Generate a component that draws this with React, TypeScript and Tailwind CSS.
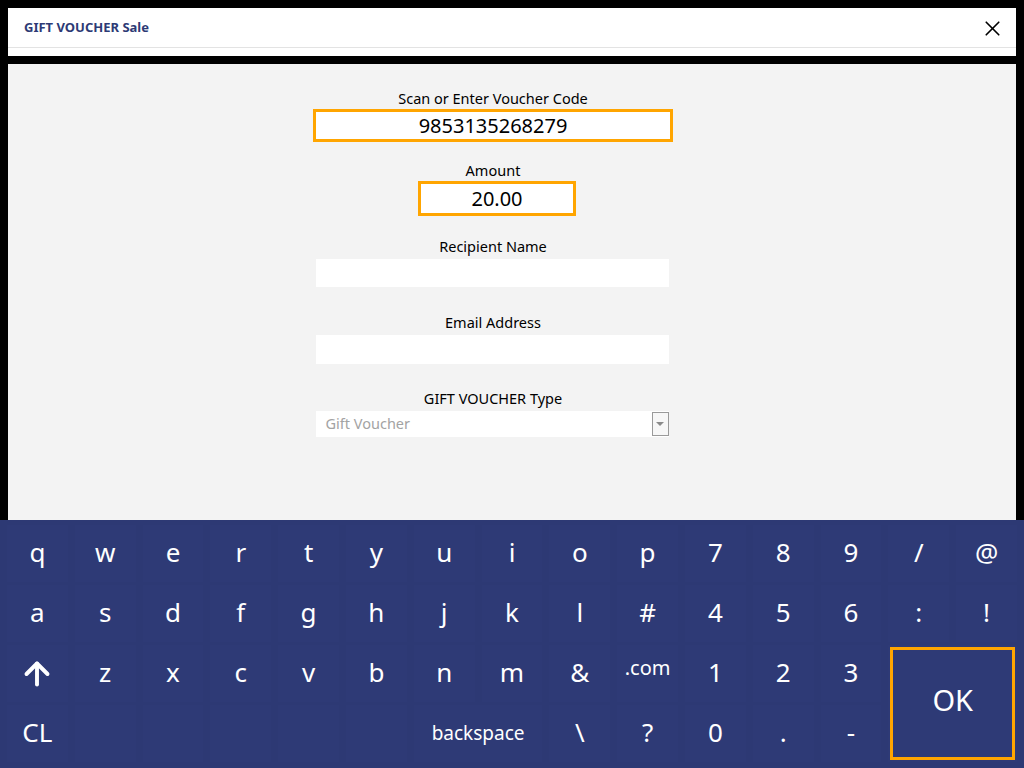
import { ArrowUp, X } from "lucide-react"

const font = { fontFamily: '"Segoe UI", "Noto Sans", "Open Sans", sans-serif' }

type Key = { label: string }

const row1: Key[] = "q w e r t y u i o p 7 8 9 / @".split(" ").map((l) => ({ label: l }))
const row2: Key[] = "a s d f g h j k l # 4 5 6 : !".split(" ").map((l) => ({ label: l }))
const row3: Key[] = "z x c v b n m & .com 1 2 3".split(" ").map((l) => ({ label: l }))

function KeyCell({ k }: { k: Key }) {
  return (
    <div className="flex items-center justify-center bg-[#2e3a76] text-white text-[26px] leading-none">
      {k.label === ".com" ? <span className="text-[20px] -mt-3">.com</span> : <span className="-mt-1">{k.label}</span>}
    </div>
  )
}

function Label({ text }: { text: string }) {
  return <div className="h-[20px] text-[14.5px] text-black leading-5 text-center">{text}</div>
}

export default function App() {
  return (
    <div className="w-[1024px] h-[768px] bg-black flex flex-col overflow-hidden" style={font}>
      {/* Header */}
      <div className="mx-2 mt-2 h-[48px] bg-white flex flex-col">
        <div className="h-[40px] flex items-center justify-between pl-4 pr-3 border-b border-[#e3e3e3]">
          <span className="text-[13px] font-bold text-[#2d3a75]">GIFT VOUCHER Sale</span>
          <X className="w-[25px] h-[25px] text-black mt-[2px] -mr-[1px]" strokeWidth={1.6} />
        </div>
      </div>

      {/* Form */}
      <div className="mx-2 mt-2 h-[456px] bg-[#f3f3f3] flex flex-col items-center pt-[24px] pr-[38px]">
        <div className="w-[360px] flex flex-col items-center">
          <Label text="Scan or Enter Voucher Code" />
          <div className="w-[360px] h-[33px] mt-[1px] bg-white border-[3px] border-[#ffa500] flex items-center justify-center text-[20px] text-black">
            9853135268279
          </div>
          <div className="h-[18px]" />
          <Label text="Amount" />
          <div className="w-[158px] h-[35px] mt-[1px] ml-[8px] bg-white border-[3px] border-[#ffa500] flex items-center justify-center text-[20px] text-black">
            20.00
          </div>
          <div className="h-[20px]" />
          <Label text="Recipient Name" />
          <div className="w-[353px] h-[28px] mt-[3px] -ml-[2px] bg-white" />
          <div className="h-[25px]" />
          <Label text="Email Address" />
          <div className="w-[353px] h-[29px] mt-[3px] -ml-[2px] bg-white" />
          <div className="h-[24px]" />
          <Label text="GIFT VOUCHER Type" />
          <div className="w-[353px] h-[26px] mt-[3px] -ml-[2px] bg-white flex items-center">
            <span className="flex-1 pl-[10px] text-[14.5px] text-[#a3a3a3]">Gift Voucher</span>
            <div className="w-[17px] h-[24px] border border-[#9a9a9a] bg-[#f7f7f7] flex items-center justify-center">
              <div className="w-0 h-0 border-l-[4px] border-r-[4px] border-t-[4px] border-l-transparent border-r-transparent border-t-[#8a8a8a]" />
            </div>
          </div>
        </div>
      </div>

      {/* Keyboard */}
      <div className="flex-1 bg-[#2d3974] px-[7px] pt-[5px] pb-[6px] grid grid-cols-[repeat(15,1fr)] grid-rows-[repeat(4,57px)] gap-x-[7px] gap-y-[3px]">
        {row1.map((k) => (
          <KeyCell key={"r1" + k.label} k={k} />
        ))}
        {row2.map((k) => (
          <KeyCell key={"r2" + k.label} k={k} />
        ))}
        <div className="flex items-center justify-center bg-[#2e3a76] text-white">
          <ArrowUp className="w-[36px] h-[36px]" strokeWidth={2.6} />
        </div>
        {row3.map((k) => (
          <KeyCell key={"r3" + k.label} k={k} />
        ))}
        <div className="col-span-2 row-span-2 bg-[#2e3a76] p-[2px]">
          <div className="w-full h-full border-[3px] border-[#ffa500] flex items-center justify-center text-white text-[29px]">
            <span className="-mt-2">OK</span>
          </div>
        </div>
        <KeyCell k={{ label: "CL" }} />
        <div className="bg-[#2e3a76]" />
        <div className="bg-[#2e3a76]" />
        <div className="bg-[#2e3a76]" />
        <div className="bg-[#2e3a76]" />
        <div className="bg-[#2e3a76]" />
        <div className="col-span-2 flex items-center justify-center bg-[#2e3a76] text-white text-[19px]">
          backspace
        </div>
        <KeyCell k={{ label: "\\" }} />
        <KeyCell k={{ label: "?" }} />
        <KeyCell k={{ label: "0" }} />
        <KeyCell k={{ label: "." }} />
        <KeyCell k={{ label: "-" }} />
      </div>
    </div>
  )
}
